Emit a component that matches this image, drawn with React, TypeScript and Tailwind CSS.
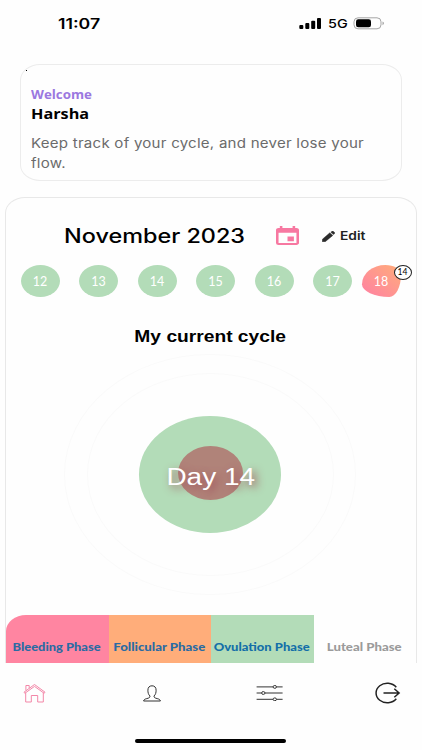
import type { ReactNode } from "react"
import clsx from "clsx"

const days = [12, 13, 14, 15, 16, 17]

const phases = [
  { name: "Bleeding Phase", tab: "w-[103px] bg-[#ff85a1] rounded-tl-[20px_16px]", label: "text-[#2a6ba3] scale-x-[1.17]" },
  { name: "Follicular Phase", tab: "w-[102px] bg-[#ffad7a]", label: "text-[#2a6ba3] scale-x-[1.2]" },
  { name: "Ovulation Phase", tab: "w-[103px] bg-[#b3dcb8]", label: "text-[#146fa8] scale-x-[1.18]" },
  { name: "Luteal Phase", tab: "w-[102px]", label: "text-[#9b9b9b] scale-x-[1.2]" },
]

// Wide-set single line of text
function Label({ className, children }: { className?: string; children: ReactNode }) {
  return <span className={clsx("block w-max whitespace-nowrap", className)}>{children}</span>
}

function StatusBar() {
  return (
    <header className="flex h-16 shrink-0 items-start pl-[58px] pt-[14px]">
      <Label className="w-[241px]! origin-left scale-x-[1.22] font-['Inter'] text-[14.5px] leading-5 font-semibold">11:07</Label>
      <svg className="mt-1 h-[11px] w-[22px]" viewBox="0 0 22 11" fill="#000">
        <rect x="0.3" y="7" width="4" height="4" rx="1" />
        <rect x="6.3" y="5" width="4" height="6" rx="1" />
        <rect x="12.2" y="2.7" width="4" height="8.3" rx="1" />
        <rect x="18" y="0" width="4" height="11" rx="1" />
      </svg>
      <Label className="ml-[7px] w-[25px]! origin-left scale-x-[1.2] font-['Inter'] text-[12px] leading-5 font-medium">5G</Label>
      <svg className="mt-[3px] h-[13px] w-[32px]" viewBox="0 0 32 13" fill="none">
        <rect x="1" y="0.8" width="27" height="11" rx="4" stroke="#a5a5a5" />
        <rect x="3" y="2.3" width="15" height="8" rx="2.3" fill="#000" />
        <path d="M29.5 4.6c2 .6 2 3 0 3.6z" fill="#a5a5a5" />
      </svg>
    </header>
  )
}

function WelcomeCard() {
  return (
    <section className="relative mx-5 h-[117px] w-[382px] shrink-0 rounded-[20px_/_16px] border border-[#ececec] pl-[10px] pt-[22px]">
      <span className="absolute left-[5px] top-[5px] size-px bg-black" />
      <Label className="origin-left scale-x-[1.16] font-['Open_Sans'] text-[11.5px] leading-4 font-bold text-[#9b78e0]">Welcome</Label>
      <Label className="mt-px origin-left scale-x-[1.16] font-['Open_Sans'] text-[14px] leading-5 font-bold">Harsha</Label>
      <p className="mt-[10px] w-[290px] origin-left scale-x-[1.16] font-['Inter'] text-[13px] leading-[19.5px] tracking-[0.2px] whitespace-nowrap text-[#6b6b6b]">
        Keep track of your cycle, and never lose your
        <br />
        flow.
      </p>
    </section>
  )
}

function CalendarHeader() {
  return (
    <div className="mt-[22px] flex h-8 items-center pl-[57.5px]">
      <Label className="w-[212.5px]! origin-left scale-x-[1.2] font-['Inter'] text-[19.5px] leading-8 font-medium">November 2023</Label>
      <svg className="-mt-px h-[19px] w-[23px]" viewBox="3 1 18 20" preserveAspectRatio="none" fill="#f778a1">
        <path d="M17 12h-5v5h5v-5zM16 1v2H8V1H6v2H5c-1.11 0-1.99.9-1.99 2L3 19a2 2 0 0 0 2 2h14c1.1 0 2-.9 2-2V5c0-1.1-.9-2-2-2h-1V1h-2zm3 18H5V8h14v11z" />
      </svg>
      <svg className="ml-[23px] h-[11px] w-[13px]" viewBox="3 3 18 18" preserveAspectRatio="none" fill="#2b2b2b" stroke="#2b2b2b" strokeWidth="0.6" strokeLinejoin="round">
        <path d="M3.500 16.500 3.300 20.700 7.500 20.500 18 10.200l-4.200-4.200zM20.500 7.200a1.300 1.300 0 0 0 0-1.700l-2-2a1.300 1.300 0 0 0-1.700 0l-1.600 1.600 3.700 3.700z" />
      </svg>
      <Label className="ml-[5px] origin-left scale-x-[1.2] font-['Inter'] text-[11.5px] leading-8 font-semibold text-[#222]">Edit</Label>
    </div>
  )
}

function DayStrip() {
  return (
    <div className="mt-[13px] ml-[14.5px] flex h-8">
      {days.map((day) => (
        <div key={day} className="mr-[19.5px] flex h-8 w-[39px] shrink-0 items-center justify-center rounded-[50%] bg-[#b3dcb8] pt-[2px]">
          <Label className="font-['Lato'] text-[12.5px] text-white">{day}</Label>
        </div>
      ))}
      <div className="relative -ml-[10px] flex h-8 w-[39px] shrink-0 items-center justify-center rounded-[60%_40%_30%_70%/60%_30%_70%_40%] bg-linear-to-tr from-[#ff7fa2] to-[#ffac78] pt-[2px]">
        <Label className="font-['Lato'] text-[12.5px] text-white">18</Label>
        <span className="absolute -top-[0.5px] left-[32px] flex h-[15px] w-[18px] items-center justify-center rounded-[50%] border-[1.3px] border-[#222] bg-white">
          <Label className="font-['Lato'] text-[8.5px] leading-none text-black">14</Label>
        </span>
      </div>
    </div>
  )
}

function CycleDial() {
  return (
    <div className="mt-[6px] ml-[58px] flex h-[241px] w-[292px] items-center justify-center rounded-[50%] border border-[#fafafa]">
      <div className="flex h-[203px] w-[247px] items-center justify-center rounded-[50%] border border-[#fafafa]">
        <div className="flex h-[117px] w-[142px] items-center justify-center rounded-[50%] bg-[#b3dcb8]">
          <div className="mt-[-4px] flex h-[54px] w-[65px] items-center justify-center rounded-[50%] bg-[#b08379]">
            <Label className="shrink-0 translate-x-[0.5px] translate-y-[5px] scale-x-[1.19] font-['Liberation_Sans'] text-[23.5px] text-white [text-shadow:3px_3px_8px_#a0505a]">Day 14</Label>
          </div>
        </div>
      </div>
    </div>
  )
}

function PhaseTabs() {
  return (
    <div className="mt-auto flex h-12">
      {phases.map((phase) => (
        <div key={phase.name} className={clsx("flex shrink-0 justify-center pt-[24px] pr-[1.5px]", phase.tab)}>
          <Label className={clsx("font-['Lato'] text-[11px] leading-4 font-black", phase.label)}>{phase.name}</Label>
        </div>
      ))}
    </div>
  )
}

function BottomNav() {
  return (
    <nav className="relative h-[87px] shrink-0">
      <div className="flex h-[60px] items-center pl-[23px]">
        <svg className="h-[20px] w-[23px]" viewBox="0 0 23 20" fill="none" stroke="#f387a8" strokeWidth="1">
          <path d="M1 9.2 11.5 1.5 22 9.2l-.8 1.1L11.5 3.4 1.8 10.3z" />
          <path d="M2.7 9.7v9.3h5.6v-6.5h6.4v6.5h5.6V9.7M2.9 7.4V2.5h3.3v2.6" />
        </svg>
        <svg className="ml-[97px] h-[17px] w-[18px]" viewBox="0 0 18 17" fill="none" stroke="#333" strokeWidth="1">
          <path d="M.6 16c.3-1.6 1.6-2 3.2-2.4 2.4-.6 3.2-1 3.2-2.6C5.3 9.500 4.900 7.500 4.900 5.200 4.900 2.500 6.300.8 9 .8s4.100 1.700 4.100 4.400c0 2.300-.4 4.300-2.100 5.800 0 1.600.8 2 3.200 2.600 1.600.4 2.900.8 3.200 2.400z" />
        </svg>
        <svg className="ml-[95px] h-[16px] w-[27px]" viewBox="0 0 27 16" fill="none" stroke="#333" strokeWidth="1">
          <path d="M.6 1.900h16.400M20.500 1.900H26.600M.6 8h4.900M9 8h17.600M.6 14.300h16.400M20.500 14.300H26.600" />
          <ellipse cx="18.800" cy="1.900" rx="1.700" ry="1.400" />
          <ellipse cx="7.300" cy="8" rx="1.700" ry="1.400" />
          <ellipse cx="18.800" cy="14.300" rx="1.700" ry="1.400" />
        </svg>
        <svg className="-mt-px ml-[91px] h-[22px] w-[27px]" viewBox="0 0 27 22" fill="none" stroke="#222" strokeWidth="1.500">
          <path d="M22.300 5.200A11.200 9.800 0 1 0 22.300 16.800M9.500 11H25M20.300 6.800 25.100 11l-4.800 4.200" />
        </svg>
      </div>
      <div className="ml-[135px] mt-[16px] h-[4px] w-[151px] rounded-full bg-black" />
    </nav>
  )
}

export default function App() {
  return (
    <main className="flex h-[750px] w-[422px] flex-col overflow-hidden bg-[#fefefe] font-['Inter',sans-serif] text-black">
      <StatusBar />
      <WelcomeCard />
      <section className="mt-4 ml-[5px] flex w-[412px] grow flex-col rounded-t-[20px_16px] border border-b-0 border-[#e8e8e8]">
        <CalendarHeader />
        <DayStrip />
        <h2 className="mt-[29px] flex h-[22px] justify-center pr-px">
          <Label className="scale-x-[1.2] font-['Liberation_Sans'] text-[16px] leading-[22px] font-bold">My current cycle</Label>
        </h2>
        <CycleDial />
        <PhaseTabs />
      </section>
      <BottomNav />
    </main>
  )
}
